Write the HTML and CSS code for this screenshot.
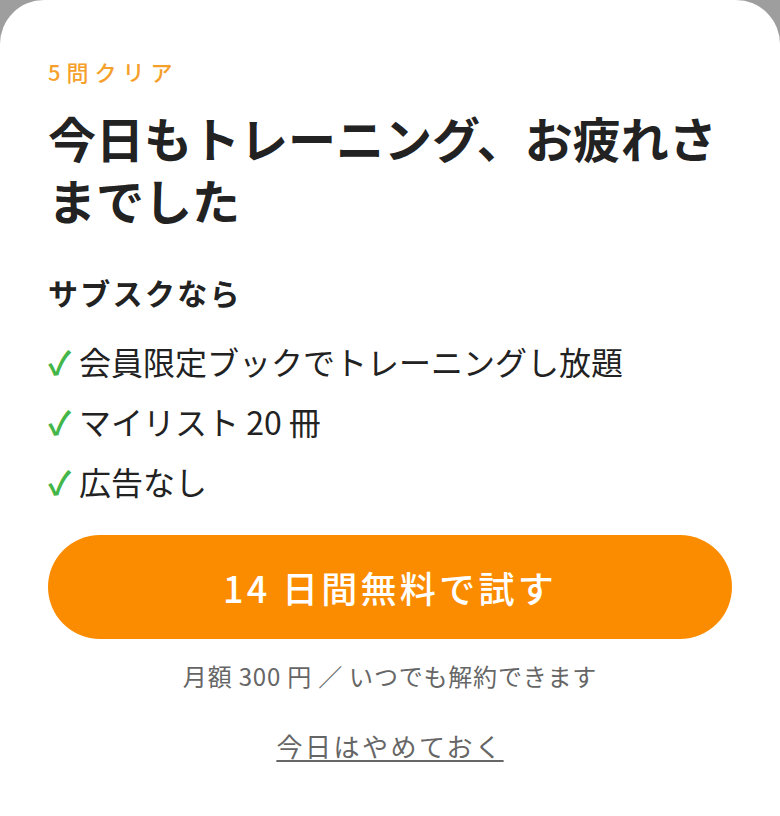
FILE: index.html
```html
<!DOCTYPE html>
<html lang="ja">
<head>
    <meta charset="UTF-8">
    <meta name="viewport" content="width=device-width, initial-scale=1.0">
    <title>トレーニング完了</title>
    <link rel="stylesheet" href="styles.css">
</head>
<body>

<div class="sheet">
    <p class="badge">5問クリア</p>
    <h1 class="title">今日もトレーニング、お疲れさまでした</h1>

    <h2 class="sub-title">サブスクなら</h2>
    <ul class="perks">
        <li><span class="check">✓</span>会員限定ブックでトレーニングし放題</li>
        <li><span class="check">✓</span>マイリスト 20 冊</li>
        <li><span class="check">✓</span>広告なし</li>
    </ul>

    <a class="trial-button" href="#">14 日間無料で試す</a>
    <p class="note">月額 300 円 ／ いつでも解約できます</p>
    <a class="skip-link" href="#">今日はやめておく</a>
</div>

</body>
</html>
```

FILE: styles.css
```css
* {
    margin: 0;
    padding: 0;
    box-sizing: border-box;
}

body {
    font-family: "Noto Sans CJK JP", "Noto Sans", sans-serif;
    background-color: #9e9e9e;
    color: #222;
    min-height: 100vh;
    display: flex;
    flex-direction: column;
}

.sheet {
    flex: 1;
    display: flex;
    flex-direction: column;
    background-color: #fff;
    border-radius: 44px 44px 0 0;
    padding: 55px 48px 40px;
}

.badge {
    font-size: 22px;
    line-height: 32px;
    letter-spacing: 6px;
    color: #f5a02a;
    font-weight: 500;
}

.title {
    margin-top: 19px;
    font-size: 48px;
    line-height: 62px;
    font-weight: 700;
    color: #222;
}

.sub-title {
    margin-top: 40px;
    font-size: 30px;
    line-height: 44px;
    letter-spacing: 2.3px;
    font-weight: 700;
    color: #222;
}

.perks {
    list-style: none;
    margin-top: 17px;
}

.perks li {
    display: flex;
    align-items: center;
    font-size: 32px;
    line-height: 60px;
    color: #222;
}

.check {
    width: 31px;
    color: #43b649;
    font-weight: 700;
}

.trial-button {
    margin-top: 24px;
    height: 104px;
    border-radius: 52px;
    background-color: #fb8c00;
    color: #fff;
    display: flex;
    align-items: center;
    justify-content: center;
    font-size: 36px;
    font-weight: 500;
    letter-spacing: 3.3px;
    text-decoration: none;
}

.note {
    margin-top: 20px;
    text-align: center;
    font-size: 24px;
    line-height: 34px;
    letter-spacing: 0.8px;
    color: #666;
}

.skip-link {
    margin-top: 33px;
    align-self: center;
    font-size: 26px;
    line-height: 40px;
    letter-spacing: 2.5px;
    color: #666;
    text-decoration: underline;
    text-decoration-thickness: 2px;
    text-underline-offset: 3px;
}
```
